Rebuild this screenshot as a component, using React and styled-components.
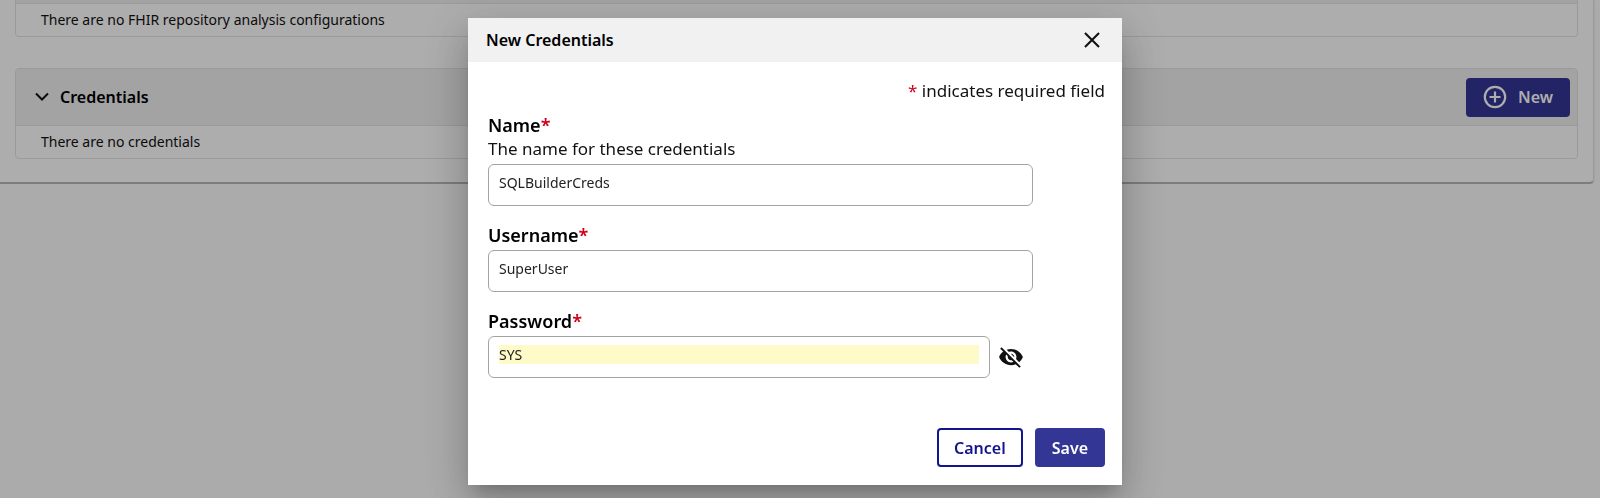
import React, { useState } from 'react';
import styled, { createGlobalStyle } from 'styled-components';

const App = () => {
    const [values, setValues] = useState({
        name: 'SQLBuilderCreds',
        username: 'SuperUser',
        password: 'SYS',
    });
    const [isPasswordShown, setIsPasswordShown] = useState(true);

    const onChange = (event) => {
        setValues({ ...values, [event.target.name]: event.target.value });
    };

    return (
        <>
            <GlobalStyle />
            <Page>
                <Section $clipped>
                    <ClippedHeader />
                    <SectionBody>
                        There are no FHIR repository analysis configurations
                    </SectionBody>
                </Section>
                <Section>
                    <SectionHeader>
                        <ChevronIcon />
                        <SectionTitle>Credentials</SectionTitle>
                        <NewButton type="button">
                            <PlusIcon />
                            New
                        </NewButton>
                    </SectionHeader>
                    <SectionBody>There are no credentials</SectionBody>
                </Section>
            </Page>
            <Backdrop>
                <Dialog
                    role="dialog"
                    aria-modal="true"
                    aria-labelledby="dialog-title"
                >
                    <DialogHeader>
                        <DialogTitle id="dialog-title">
                            New Credentials
                        </DialogTitle>
                        <IconButton type="button" aria-label="Close">
                            <CloseIcon />
                        </IconButton>
                    </DialogHeader>
                    <Form onSubmit={(event) => event.preventDefault()}>
                        <RequiredNote>
                            <Star>*</Star> indicates required field
                        </RequiredNote>
                        <Fields>
                            <Field>
                                <Label htmlFor="name">
                                    Name<Star>*</Star>
                                </Label>
                                <Hint id="name-hint">
                                    The name for these credentials
                                </Hint>
                                <ControlRow>
                                    <InputBox>
                                        <Input
                                            id="name"
                                            name="name"
                                            aria-describedby="name-hint"
                                            value={values.name}
                                            onChange={onChange}
                                        />
                                    </InputBox>
                                </ControlRow>
                            </Field>
                            <Field>
                                <Label htmlFor="username">
                                    Username<Star>*</Star>
                                </Label>
                                <ControlRow>
                                    <InputBox>
                                        <Input
                                            id="username"
                                            name="username"
                                            value={values.username}
                                            onChange={onChange}
                                        />
                                    </InputBox>
                                </ControlRow>
                            </Field>
                            <Field>
                                <Label htmlFor="password">
                                    Password<Star>*</Star>
                                </Label>
                                <ControlRow $withToggle>
                                    <InputBox>
                                        <Input
                                            id="password"
                                            name="password"
                                            type={
                                                isPasswordShown
                                                    ? 'text'
                                                    : 'password'
                                            }
                                            $highlighted
                                            value={values.password}
                                            onChange={onChange}
                                        />
                                    </InputBox>
                                    <IconButton
                                        type="button"
                                        aria-label="Toggle password visibility"
                                        onClick={() =>
                                            setIsPasswordShown(!isPasswordShown)
                                        }
                                    >
                                        <EyeOffIcon />
                                    </IconButton>
                                </ControlRow>
                            </Field>
                        </Fields>
                        <Actions>
                            <Button type="button">Cancel</Button>
                            <Button type="submit" $primary>
                                Save
                            </Button>
                        </Actions>
                    </Form>
                </Dialog>
            </Backdrop>
        </>
    );
};

export default App;

/*--------------------------------------
-----------------Icons------------------
--------------------------------------*/
const ChevronIcon = () => (
    <svg width="14" height="10" viewBox="0 0 14 10" aria-hidden="true">
        <path
            d="M1 1.5l6 6 6-6"
            fill="none"
            stroke="currentColor"
            strokeWidth="2"
        />
    </svg>
);

const PlusIcon = () => (
    <svg width="24" height="24" viewBox="0 0 24 24" aria-hidden="true">
        <g fill="none" stroke="currentColor" strokeWidth="2.2">
            <circle cx="12" cy="12" r="10.2" />
            <path d="M12 6.5v11M6.5 12h11" />
        </g>
    </svg>
);

const CloseIcon = () => (
    <svg width="24" height="24" viewBox="0 0 24 24" aria-hidden="true">
        <path
            d="M5 5l14 14M19 5L5 19"
            fill="none"
            stroke="currentColor"
            strokeWidth="2.1"
        />
    </svg>
);

const EyeOffIcon = () => (
    <svg width="26" height="26" viewBox="0 0 24 24" aria-hidden="true">
        <path
            fill="currentColor"
            d="M12 7c2.76 0 5 2.24 5 5 0 .65-.13 1.26-.36 1.83l2.92 2.92c1.51-1.26 2.7-2.89 3.43-4.75-1.73-4.39-6-7.5-11-7.5-1.4 0-2.74.25-3.98.7l2.16 2.16C10.74 7.13 11.35 7 12 7zM2 4.27l2.28 2.28.46.46C3.08 8.3 1.78 10.02 1 12c1.73 4.39 6 7.5 11 7.5 1.55 0 3.03-.3 4.38-.84l.42.42L19.73 22 21 20.73 3.27 3 2 4.27zM7.53 9.8l1.55 1.55c-.05.21-.08.43-.08.65 0 1.66 1.34 3 3 3 .22 0 .44-.03.65-.08l1.55 1.55c-.67.33-1.41.53-2.2.53-2.76 0-5-2.24-5-5 0-.79.2-1.53.53-2.2zm4.31-.78l3.15 3.15.02-.16c0-1.66-1.34-3-3-3l-.17.01z"
        />
    </svg>
);

/*--------------------------------------
------------Styled Components-----------
--------------------------------------*/
const GlobalStyle = createGlobalStyle`
    * {
        box-sizing: border-box;
    }

    body {
        margin: 0;
        background: #fdfdfd;
        color: #111;
        font-family: 'Noto Sans', sans-serif;
        font-size: 14px;
    }

    button,
    input {
        font-family: inherit;
    }
`;

const Page = styled.main`
    display: flex;
    flex-direction: column;
    gap: 31px;
    margin-right: 6px;
    padding: 0 15px 23px;
    border-right: 1px solid #e4e4e4;
    border-bottom: 2px solid #b8b8b8;
    border-radius: 0 0 5px 0;
    background: #fff;
    box-shadow: 0 1px 2px rgba(0, 0, 0, 0.2);
`;

const Section = styled.section`
    border: 1px solid #e4e4e4;
    border-top-width: ${({ $clipped }) => ($clipped ? 0 : '1px')};
    border-radius: ${({ $clipped }) => ($clipped ? '0 0 4px 4px' : '4px')};
    overflow: hidden;
`;

const SectionHeader = styled.header`
    display: flex;
    align-items: center;
    height: 57px;
    padding: 0 7px 0 19px;
    border-bottom: 1px solid #e4e4e4;
    background: #f1f1f1;
`;

const ClippedHeader = styled.div`
    height: 4px;
    border-bottom: 1px solid #e4e4e4;
    background: #f1f1f1;
`;

const SectionTitle = styled.h2`
    flex: 1;
    margin: 0 0 0 11px;
    color: #000;
    font-size: 16px;
    font-weight: 600;
`;

const SectionBody = styled.div`
    padding: 0 25px;
    font-size: 14px;
    line-height: 32px;
`;

const Button = styled.button`
    display: flex;
    align-items: center;
    height: 39px;
    padding: 0 15px;
    border: 2px solid ${({ $primary }) => ($primary ? '#333695' : '#14148c')};
    border-radius: 4px;
    background: ${({ $primary }) => ($primary ? '#333695' : '#fff')};
    color: ${({ $primary }) => ($primary ? '#fff' : '#14148c')};
    font-size: 16px;
    font-weight: 600;
`;

const NewButton = styled(Button).attrs({ $primary: true })`
    gap: 11px;
`;

const Backdrop = styled.div`
    position: fixed;
    inset: 0;
    display: flex;
    justify-content: center;
    align-items: flex-start;
    padding: 18px 10px 12px 0;
    background: rgba(0, 0, 0, 0.32);
`;

const Dialog = styled.div`
    width: 654px;
    max-width: 100%;
    background: #fff;
    box-shadow: 0 11px 15px -7px rgba(0, 0, 0, 0.2),
        0 24px 38px 3px rgba(0, 0, 0, 0.14), 0 9px 46px 8px rgba(0, 0, 0, 0.12);
`;

const DialogHeader = styled.header`
    display: flex;
    justify-content: space-between;
    align-items: center;
    height: 44px;
    padding: 0 18px;
    background: #f1f1f1;
`;

const DialogTitle = styled.h1`
    margin: 0;
    color: #000;
    font-size: 16px;
    font-weight: 600;
`;

const IconButton = styled.button`
    display: flex;
    padding: 0;
    border: 0;
    background: none;
    color: #111;
`;

const Form = styled.form`
    padding: 17px 17px 18px 20px;
    font-size: 17px;
    line-height: 24px;
`;

const RequiredNote = styled.p`
    margin: 0 0 10px;
    text-align: right;
`;

const Star = styled.span`
    color: #d0021b;
`;

const Fields = styled.div`
    display: flex;
    flex-direction: column;
    gap: 17px;
    margin-right: 72px;
`;

const Field = styled.div`
    display: flex;
    flex-direction: column;
`;

const Label = styled.label`
    color: #000;
    font-size: 18px;
    font-weight: 600;
`;

const Hint = styled.span`
    color: #111;
`;

const ControlRow = styled.div`
    display: flex;
    align-items: center;
    gap: 8px;
    margin-top: 3px;
    padding-right: ${({ $withToggle }) => ($withToggle ? '9px' : 0)};
`;

const InputBox = styled.div`
    flex: 1;
    padding: 8px 10px 13px;
    border: 1px solid #a3a3a3;
    border-radius: 6px;
`;

const Input = styled.input`
    display: block;
    width: 100%;
    height: 19px;
    padding: 0;
    border: 0;
    outline: 0;
    background: ${({ $highlighted }) => ($highlighted ? '#fffbc8' : '#fff')};
    color: #222;
    font-size: 14px;
`;

const Actions = styled.div`
    display: flex;
    justify-content: flex-end;
    gap: 12px;
    margin-top: 50px;
`;
